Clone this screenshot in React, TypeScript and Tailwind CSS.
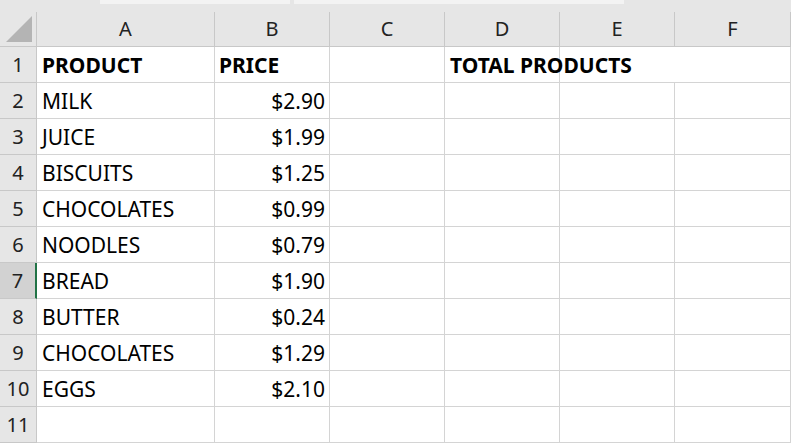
const cols = ["A", "B", "C", "D", "E", "F"];
const data: [string, string][] = [
  ["PRODUCT", "PRICE"],
  ["MILK", "$2.90"],
  ["JUICE", "$1.99"],
  ["BISCUITS", "$1.25"],
  ["CHOCOLATES", "$0.99"],
  ["NOODLES", "$0.79"],
  ["BREAD", "$1.90"],
  ["BUTTER", "$0.24"],
  ["CHOCOLATES", "$1.29"],
  ["EGGS", "$2.10"],
  ["", ""],
];

export default function App() {
  return (
    <div className="w-[791px] h-[445px] overflow-hidden bg-white font-['Open_Sans',sans-serif] text-[21px] text-black">
      <div className="h-[12px] bg-[#e6e6e6] flex gap-[4px] pl-[100px]">
        <div className="w-[190px] h-[4px] bg-[#f3f3f3]" />
        <div className="w-[330px] h-[4px] bg-[#f3f3f3]" />
      </div>
      <div className="grid grid-cols-[37px_178px_115px_115px_115px_115px_116px]">
        <div className="h-[35px] bg-[#e6e6e6] border-r border-b border-[#c8c8c8] relative">
          <div className="absolute right-[4px] bottom-[4px] w-0 h-0 border-l-[26px] border-l-transparent border-b-[26px] border-b-[#b4b4b4]" />
        </div>
        {cols.map((c) => (
          <div key={c} className="h-[35px] bg-[#e6e6e6] border-r border-b border-[#c8c8c8] flex items-center justify-center text-[#222] text-[20px]">
            {c}
          </div>
        ))}
        {data.map(([a, b], i) => {
          const sel = i === 6;
          return [
            <div
              key={`h${i}`}
              className={`h-[36px] border-b border-[#c8c8c8] flex items-center justify-center text-[#222] text-[20px] ${sel ? "bg-[#d2d2d2] border-r-2 border-r-[#217346]" : "bg-[#e6e6e6] border-r border-r-[#c8c8c8]"}`}
            >
              {i + 1}
            </div>,
            <div key={`a${i}`} className={`h-[36px] border-r border-b border-[#d4d4d4] flex items-center pt-[2px] pl-[5px] whitespace-nowrap ${i === 0 ? "font-bold" : ""}`}>
              {a}
            </div>,
            <div key={`b${i}`} className={`h-[36px] border-r border-b border-[#d4d4d4] flex items-center pt-[2px] ${i === 0 ? "font-bold pl-[4px]" : "justify-end pr-[4px]"}`}>
              {b}
            </div>,
            <div key={`c${i}`} className="h-[36px] border-r border-b border-[#d4d4d4]" />,
            <div key={`d${i}`} className="h-[36px] border-r border-b border-[#d4d4d4] flex items-center pt-[2px] pl-[5px] font-bold whitespace-nowrap overflow-visible relative z-10">
              {i === 0 ? "TOTAL PRODUCTS" : ""}
            </div>,
            <div key={`e${i}`} className={`h-[36px] border-b border-[#d4d4d4] ${i === 0 ? "" : "border-r"}`} />,
            <div key={`f${i}`} className="h-[36px] border-r border-b border-[#d4d4d4]" />,
          ];
        })}
      </div>
    </div>
  );
}
